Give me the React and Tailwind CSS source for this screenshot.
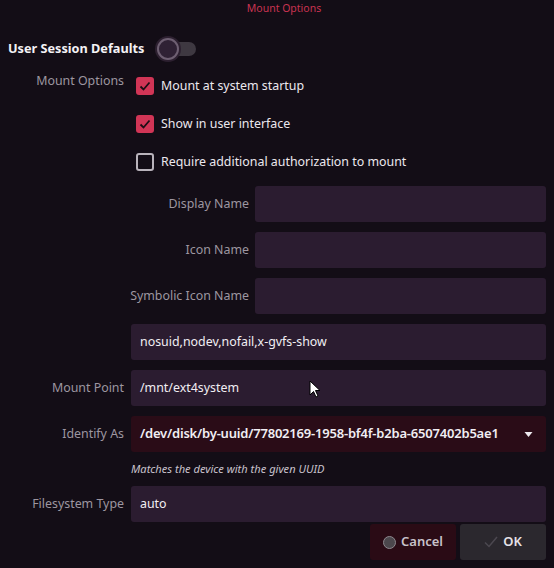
import React from "react";

function Checkbox({ checked }) {
  return checked ? (
    <span className="w-[18px] h-[18px] rounded-[3px] bg-[#d13556] flex items-center justify-center shrink-0">
      <svg viewBox="0 0 18 18" className="w-[18px] h-[18px]">
        <path d="M4.5 9.5 L7.5 12.5 L13.5 5.5" fill="none" stroke="#1c0e15" strokeWidth="1.8" />
      </svg>
    </span>
  ) : (
    <span className="w-[18px] h-[18px] rounded-[3px] border-2 border-[#b9b3bb] shrink-0" />
  );
}

function CheckRow({ checked, children }) {
  return (
    <div className="h-[18px] flex items-center gap-[7px]">
      <Checkbox checked={checked} />
      <span className="text-[#ece8ee]">{children}</span>
    </div>
  );
}

function Field({ value }) {
  return (
    <div className="flex-1 h-[36px] rounded-[3px] bg-[#2b1c30] flex items-center px-[9px] text-[#f1eef3]">
      {value}
    </div>
  );
}

export default function App() {
  return (
    <div className="relative w-[554px] h-[568px] overflow-hidden bg-[#130d16] text-[12.4px] font-['Noto_Sans',sans-serif]">
      {/* header */}
      <div className="h-[18px] flex items-center justify-center pl-[14px] text-[10.5px] text-[#c93351]">
        Mount Options
      </div>

      {/* session defaults */}
      <div className="mt-[20px] h-[22px] flex items-center pl-[8px] gap-[13px]">
        <span className="font-bold text-[12.7px] text-[#f4f2f5]">User Session Defaults</span>
        <span className="relative w-[39px] h-[14px] rounded-full bg-[#3e3841]">
          <span className="absolute left-0 top-[-4px] w-[22px] h-[22px] rounded-full bg-[#2f2134] border-[2px] border-[#6e5f72] shadow-[0_0_0_2px_#2d2030]" />
        </span>
      </div>

      <div className="pr-[8px] flex flex-col">
        {/* check options */}
        <div className="mt-[17px] flex gap-[7px]">
          <div className="w-[124px] text-right leading-[18px] -mt-[5px] text-[#9d96a0]">Mount Options</div>
          <div className="pl-[5px] flex flex-col gap-[20px]">
            <CheckRow checked>Mount at system startup</CheckRow>
            <CheckRow checked>Show in user interface</CheckRow>
            <CheckRow>Require additional authorization to mount</CheckRow>
          </div>
        </div>

        {/* names */}
        <div className="mt-[15px] flex flex-col gap-[10px]">
          {["Display Name", "Icon Name", "Symbolic Icon Name"].map((l) => (
            <div key={l} className="flex items-center gap-[6px]">
              <div className="w-[249px] text-right text-[#9d96a0]">{l}</div>
              <Field value="" />
            </div>
          ))}
          <div className="flex items-center gap-[7px]">
            <div className="w-[124px]" />
            <Field value="nosuid,nodev,nofail,x-gvfs-show" />
          </div>
          <div className="flex items-center gap-[7px]">
            <div className="w-[124px] text-right text-[#9d96a0]">Mount Point</div>
            <Field value="/mnt/ext4system" />
          </div>
          <div className="flex items-center gap-[7px]">
            <div className="w-[124px] text-right text-[#9d96a0]">Identify As</div>
            <div className="flex-1 h-[36px] rounded-[3px] bg-[#2a0c17] flex items-center justify-between pl-[9px] pr-[13px]">
              <span className="font-semibold text-[13px] text-[#f1eef3] tracking-[-0.2px]">
                /dev/disk/by-uuid/77802169-1958-bf4f-b2ba-6507402b5ae1
              </span>
              <svg viewBox="0 0 8 5" className="w-[9px] h-[5px]">
                <path d="M0 0 L8 0 L4 5 Z" fill="#eeeaef" />
              </svg>
            </div>
          </div>
          <div className="flex items-center gap-[7px] h-[14px]">
            <div className="w-[124px]" />
            <span className="italic text-[11.1px] text-[#c9c2cc]">Matches the device with the given UUID</span>
          </div>
          <div className="flex items-center gap-[7px]">
            <div className="w-[124px] text-right text-[#9d96a0]">Filesystem Type</div>
            <Field value="auto" />
          </div>
        </div>

        {/* buttons */}
        <div className="mt-[2px] flex justify-end gap-[4px] text-[13px]">
          <button className="w-[86px] h-[36px] rounded-[3px] bg-[#2a0b15] flex items-center justify-center gap-[5px] font-semibold text-[#c8c2ca]">
            <span className="w-[13px] h-[13px] rounded-full bg-[#4b474c] border-[1.5px] border-[#8d888e]" />
            Cancel
          </button>
          <button className="w-[86px] h-[36px] rounded-[3px] bg-[#2b282e] flex items-center justify-center gap-[5px] font-semibold text-[#e6e2e8]">
            <svg viewBox="0 0 14 12" className="w-[14px] h-[12px]">
              <path d="M1 6.5 L5 10.5 L13 1" fill="none" stroke="#4c4850" strokeWidth="1.5" />
            </svg>
            OK
          </button>
        </div>
      </div>

      {/* mouse pointer */}
      <svg viewBox="0 0 12 19" className="absolute left-[309px] top-[380px] w-[12px] h-[19px]">
        <path d="M1 1 L1 15 L4.5 11.5 L7 17 L9 16 L6.5 10.5 L11 10.5 Z" fill="#ffffff" stroke="#000000" strokeWidth="1" strokeLinejoin="round" />
      </svg>
    </div>
  );
}
